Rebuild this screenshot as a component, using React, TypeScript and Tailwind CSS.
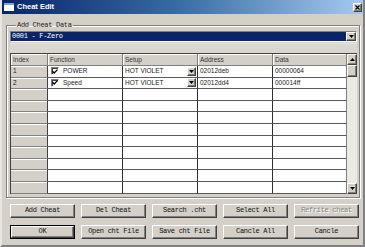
import React from "react";

const rows = [
  { i: "1", f: "POWER", s: "HOT VIOLET", a: "02012deb", d: "00000064" },
  { i: "2", f: "Speed", s: "HOT VIOLET", a: "02012dd4", d: "000014ff" },
  ...Array.from({ length: 9 }, () => ({ i: "", f: "", s: "", a: "", d: "" })),
];

const raised =
  "border border-t-white border-l-white border-r-[#404040] border-b-[#404040] shadow-[inset_-1px_-1px_0_#808080]";

function Arrow({ up }: { up?: boolean }) {
  return (
    <svg width="5" height="3" viewBox="0 0 5 3">
      <path d={up ? "M2.5 0L5 3H0Z" : "M0 0H5L2.5 3Z"} fill="#000" />
    </svg>
  );
}

function Check() {
  return (
    <div className="w-[8px] h-[8px] bg-white border border-t-[#808080] border-l-[#808080] border-b-white border-r-white shadow-[inset_1px_1px_0_#404040] flex items-center justify-center">
      <svg width="6" height="5" viewBox="0 0 6 5">
        <path d="M0.5 2.2L2.2 4L5.5 0.6" stroke="#000" strokeWidth="1.3" fill="none" />
      </svg>
    </div>
  );
}

function Btn({ label, def, off }: { label: string; def?: boolean; off?: boolean }) {
  const inner = (
    <div
      className={`h-full flex items-center justify-center bg-[#d4d0c8] ${raised} ${
        off ? "text-[#8a877f] [text-shadow:1px_1px_0_#fff]" : "text-[#111]"
      }`}
    >
      {label}
    </div>
  );
  return def ? <div className="h-[14px] border border-black">{inner}</div> : <div className="h-[14px]">{inner}</div>;
}

export default function App() {
  return (
    <div className="w-[365px] h-[247px] bg-[#d4d0c8] flex flex-col border-l-2 border-r-2 border-b-2 border-l-[#e8e6e2] border-r-[#808080] border-b-[#808080] font-['Liberation_Mono',monospace] text-[7px] tracking-[-0.3px] text-[#111] overflow-hidden">
      {/* title bar */}
      <div className="h-[14px] shrink-0 flex items-center bg-linear-to-r from-[#0a246a] via-[#3a6ea5] to-[#a6caf0] pl-[1px] pr-[1px]">
        <svg width="10" height="8" viewBox="0 0 10 8" className="ml-[1px]">
          <rect x="0" y="0" width="10" height="8" fill="#fff" />
          <rect x="0" y="0" width="10" height="2" fill="#7fa6d8" />
        </svg>
        <span className="ml-[3px] font-['Liberation_Sans',sans-serif] font-bold text-white text-[7.5px] tracking-normal">
          Cheat Edit
        </span>
        <div className={`ml-auto w-[9px] h-[9px] bg-[#d4d0c8] ${raised} flex items-center justify-center`}>
          <svg width="5" height="5" viewBox="0 0 5 5">
            <path d="M0.5 0.5L4.5 4.5M4.5 0.5L0.5 4.5" stroke="#000" strokeWidth="1.2" />
          </svg>
        </div>
      </div>

      {/* group box */}
      <div className="pl-[4px] pr-[3px] pt-[7px]">
        <fieldset className="border border-[#808080] shadow-[inset_1px_1px_0_#fff,1px_1px_0_#fff] pl-[3px] pr-[2px] pb-[3px]">
          <legend className="ml-[6px] px-[1px] leading-[8px] text-[#222]">Add Cheat Data</legend>

          {/* combobox */}
          <div className="mt-[2px] h-[11px] flex border border-t-[#808080] border-l-[#808080] border-b-white border-r-white bg-white">
            <div className="flex-1 bg-[#0a246a] text-white flex items-center pl-[1px] leading-none">0001 - F-Zero</div>
            <div className={`w-[10px] bg-[#d4d0c8] ${raised} flex items-center justify-center`}>
              <Arrow />
            </div>
          </div>

          {/* strip */}
          <div className="h-[10px] mt-[1px] border-t border-[#e8e6e2] bg-[#dad7d0]" />

          {/* grid */}
          <div className="flex border-l border-t border-[#404040] font-['Liberation_Sans',sans-serif] text-[6.5px] tracking-normal text-[#1a1a1a]">
            <div className="flex-1">
              <div className="grid grid-cols-[37px_75px_75px_75px_74px] h-[12px]">
                {["Index", "Function", "Setup", "Address", "Data"].map((h) => (
                  <div
                    key={h}
                    className="bg-[#d4d0c8] border-r border-b border-[#808080] shadow-[inset_1px_1px_0_#fff] pl-[2px] flex items-center text-[#333]"
                  >
                    {h}
                  </div>
                ))}
              </div>
              {rows.map((r, k) => (
                <div key={k} className="grid grid-cols-[37px_75px_75px_75px_74px] h-[11.6px]">
                  <div className="bg-[#d4d0c8] border-r border-r-[#404040] border-b border-b-[#808080] shadow-[inset_0_1px_0_#fff] pl-[2px] flex items-center">
                    {r.i}
                  </div>
                  <div className="bg-white border-r border-r-[#303030] border-b border-b-[#5a5a5a] flex items-center pl-[3px]">
                    {r.f && (
                      <>
                        <Check />
                        <span className="ml-[4px]">{r.f}</span>
                      </>
                    )}
                  </div>
                  <div className="bg-white border-r border-r-[#303030] border-b border-b-[#5a5a5a] flex items-center pl-[2px] pr-[1px]">
                    {r.s && (
                      <>
                        <span className="flex-1">{r.s}</span>
                        <div className={`w-[9px] h-[9px] bg-[#d4d0c8] ${raised} flex items-center justify-center`}>
                          <Arrow />
                        </div>
                      </>
                    )}
                  </div>
                  <div className="bg-white border-r border-r-[#303030] border-b border-b-[#5a5a5a] flex items-center pl-[2px]">
                    {r.a}
                  </div>
                  <div className="bg-white border-r border-r-[#808080] border-b border-b-[#5a5a5a] flex items-center pl-[2px]">
                    {r.d}
                  </div>
                </div>
              ))}
            </div>

            {/* scrollbar */}
            <div className="w-[10px] flex flex-col bg-[#ebe9e4]">
              <div className={`h-[11px] bg-[#d4d0c8] ${raised} flex items-center justify-center`}>
                <Arrow up />
              </div>
              <div className={`h-[12px] bg-[#d4d0c8] ${raised}`} />
              <div className="flex-1" />
              <div className={`h-[11px] bg-[#d4d0c8] ${raised} flex items-center justify-center`}>
                <Arrow />
              </div>
            </div>
          </div>
        </fieldset>
      </div>

      {/* buttons */}
      <div className="grid grid-cols-5 gap-x-[6px] gap-y-[7px] pl-[8px] pr-[4px] mt-[6px]">
        <Btn label="Add Cheat" />
        <Btn label="Del Cheat" />
        <Btn label="Search .cht" />
        <Btn label="Select All" />
        <Btn label="Refrite cheat" off />
        <Btn label="OK" def />
        <Btn label="Open cht File" />
        <Btn label="Save cht File" />
        <Btn label="Cancle All" />
        <Btn label="Cancle" />
      </div>
    </div>
  );
}
